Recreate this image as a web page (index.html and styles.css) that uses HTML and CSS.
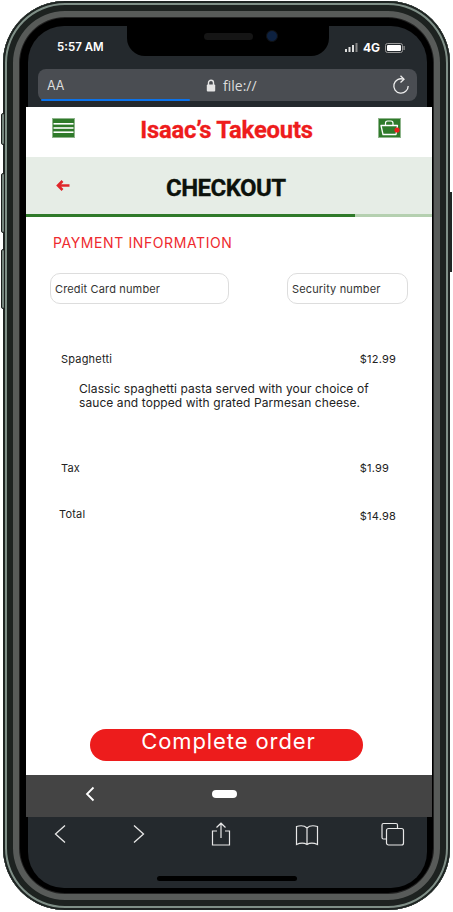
FILE: index.html
```html
<!DOCTYPE html>
<html lang="en">
<head>
  <meta charset="UTF-8" />
  <title>Isaac's Takeouts - Checkout</title>
  <meta name="viewport" content="width=device-width, initial-scale=1.0" />
  <link rel="stylesheet" href="styles.css">
</head>
<body>

<div class="phone">
  <span class="side-btn btn-mute"></span>
  <span class="side-btn btn-up"></span>
  <span class="side-btn btn-down"></span>
  <span class="btn-power"></span>

  <div class="notch">
    <span class="speaker"></span>
    <span class="camera"></span>
  </div>

  <div class="screen">
    <div class="status-bar">
      <span class="time">5:57 AM</span>
      <div class="status-icons">
        <svg width="13" height="9" viewBox="0 0 13 9"><rect x="0" y="6" width="2" height="3" fill="#ddd"/><rect x="3.5" y="4" width="2" height="5" fill="#ddd"/><rect x="7" y="2" width="2" height="7" fill="#ddd"/><rect x="10.5" y="0" width="2" height="9" fill="#888"/></svg>
        <span class="net">4G</span>
        <svg width="20" height="10" viewBox="0 0 20 10"><rect x="0.5" y="0.5" width="17" height="9" rx="2" fill="none" stroke="#999"/><rect x="2" y="2" width="14" height="6" rx="1" fill="#fff"/><rect x="18.5" y="3" width="1.2" height="4" fill="#999"/></svg>
      </div>
    </div>

    <div class="url-bar">
      <span class="aa">AA</span>
      <div class="url">
        <svg width="10" height="13" viewBox="0 0 10 13"><path d="M2.5 6V3.8a2.5 2.5 0 0 1 5 0V6" fill="none" stroke="#e4e4e4" stroke-width="1.4"/><rect x="0.8" y="5.5" width="8.4" height="7" rx="1" fill="#e4e4e4"/></svg>
        <span>file://</span>
      </div>
      <svg class="reload" width="18" height="20" viewBox="0 0 18 20"><path d="M11.5 4.2A7.2 7.2 0 1 0 16.2 11" fill="none" stroke="#eee" stroke-width="1.3"/><path d="M8.5 0.8L12 4.2 8.5 7.5" fill="none" stroke="#eee" stroke-width="1.3"/></svg>
      <span class="url-progress"></span>
    </div>

    <div class="page">
      <header class="site-header">
        <svg class="head-icon" width="23" height="20" viewBox="0 0 23 20"><rect width="23" height="20" fill="#2f7a2a"/><rect x="1.5" y="5" width="20" height="1.6" fill="#fff"/><rect x="1.5" y="9.2" width="20" height="1.6" fill="#fff"/><rect x="1.5" y="13.4" width="20" height="1.6" fill="#fff"/></svg>
        <h1>Isaac’s Takeouts</h1>
        <svg class="head-icon" width="23" height="20" viewBox="0 0 23 20"><rect width="23" height="20" fill="#2f7a2a"/><path d="M3 7.5H19.5L18 16.5H5Z" fill="none" stroke="#fff" stroke-width="1.3" stroke-linejoin="round"/><path d="M7.5 7.5V5.2C7.5 3.6 8.5 3 9.5 3H13C14 3 15 3.6 15 5.2V7.5" fill="none" stroke="#fff" stroke-width="1.2"/><circle cx="19" cy="12" r="2.6" fill="#ee1c1c"/></svg>
      </header>

      <div class="checkout-bar">
        <svg class="back-arrow" width="14" height="11" viewBox="0 0 14 11"><path d="M6.5 1L2 5.5 6.5 10M2 5.5H13.5" fill="none" stroke="#e0262a" stroke-width="2.6"/></svg>
        <h2>CHECKOUT</h2>
      </div>
      <div class="step-line"><span class="step-done"></span></div>

      <main class="content">
        <h3 class="section-title">PAYMENT INFORMATION</h3>

        <div class="inputs">
          <input class="field card-field" type="text" placeholder="Credit Card number" />
          <input class="field cvv-field" type="text" placeholder="Security number" />
        </div>

        <div class="line spaghetti"><span>Spaghetti</span><span>$12.99</span></div>
        <p class="desc">Classic spaghetti pasta served with your choice of sauce and topped with grated Parmesan cheese.</p>
        <div class="line tax"><span>Tax</span><span>$1.99</span></div>
        <div class="line total"><span>Total</span><span class="total-price">$14.98</span></div>

        <button class="order-btn"><span>Complete order</span></button>
      </main>

      <div class="android-nav">
        <svg width="12" height="16" viewBox="0 0 12 16"><path d="M9.5 1.5L3 8l6.5 6.5" fill="none" stroke="#fff" stroke-width="1.8"/></svg>
        <span class="pill"></span>
      </div>
    </div>

    <nav class="toolbar">
      <svg width="24" height="24" viewBox="0 0 24 24"><path d="M17 3.5L7.5 12l9.5 8.5" fill="none" stroke="#e8e8e8" stroke-width="1.3"/></svg>
      <svg width="24" height="24" viewBox="0 0 24 24"><path d="M7 3.5L16.5 12 7 20.5" fill="none" stroke="#e8e8e8" stroke-width="1.3"/></svg>
      <svg width="24" height="24" viewBox="0 0 24 24"><path d="M8 9H3.5V23H20.5V9H16M12 16V1.5M7.5 5.5L12 1.2 16.5 5.5" fill="none" stroke="#e8e8e8" stroke-width="1.2"/></svg>
      <svg width="24" height="24" viewBox="0 0 24 24"><path d="M12 6C9.5 3.5 5 3.5 1.5 4.5V22.5C5 21 9.5 21 12 22.5 14.5 21 19 21 22.5 22.5V4.5C19 3.5 14.5 3.5 12 6ZM12 6V22.5" fill="none" stroke="#e8e8e8" stroke-width="1.2"/></svg>
      <svg width="24" height="24" viewBox="0 0 24 24"><path d="M5 17H2.5A1.5 1.5 0 0 1 1 15.5V3A1.5 1.5 0 0 1 2.5 1.5H15A1.5 1.5 0 0 1 16.5 3V6" fill="none" stroke="#e8e8e8" stroke-width="1.2"/><rect x="5.5" y="6.5" width="17" height="16.5" rx="2" fill="none" stroke="#e8e8e8" stroke-width="1.2"/></svg>
    </nav>

    <div class="home-bar"></div>
  </div>
</div>

</body>
</html>
```

FILE: styles.css
```css
body {
  margin: 0;
  background: #fff;
  font-family: 'Inter', 'Liberation Sans', sans-serif;
}

/* device frame */
.phone {
  position: relative;
  box-sizing: border-box;
  width: 447px;
  height: 909px;
  margin: 1px 0 0 3px;
  padding: 25px 23px 22px 25px;
  background: #000;
  border-radius: 62px;
  box-shadow: inset 0 0 0 2px #1e2422, inset 0 0 0 4px #7f8f87, inset 0 0 0 10px #1d2220, inset 0 0 0 16px #585b59, inset 0 0 0 17px #222;
}

.side-btn {
  position: absolute;
  left: -2px;
  width: 4px;
  background: #74837c;
  border: 1px solid #1c1f1e;
  box-sizing: border-box;
  border-radius: 2px;
}
.btn-mute { top: 112px; height: 32px; }
.btn-up { top: 172px; height: 60px; }
.btn-down { top: 248px; height: 60px; }
.btn-power {
  position: absolute;
  right: -2px;
  top: 191px;
  width: 2px;
  height: 80px;
  background: #222725;
}

.notch {
  position: absolute;
  left: 124px;
  top: 25px;
  width: 202px;
  height: 30px;
  background: #000;
  border-radius: 0 0 18px 18px;
  z-index: 2;
}
.speaker {
  position: absolute;
  left: 77px;
  top: 7px;
  width: 49px;
  height: 7px;
  background: #151515;
  border-radius: 4px;
}
.camera {
  position: absolute;
  left: 139px;
  top: 4px;
  width: 12px;
  height: 12px;
  background: #0d2140;
  border: 1px solid #111;
  box-sizing: border-box;
  border-radius: 50%;
}

.screen {
  position: relative;
  height: 100%;
  background: #24292d;
  border-radius: 36px;
  display: flex;
  flex-direction: column;
}

/* status + url */
.status-bar {
  height: 43px;
  padding: 0 22px 0 29px;
  display: flex;
  justify-content: space-between;
  align-items: center;
  color: #fff;
  font-size: 11.5px;
  font-weight: 600;
  line-height: 14px;
  box-sizing: border-box;
  flex: none;
}
.time { padding-bottom: 2px; }
.status-icons {
  display: flex;
  align-items: center;
  gap: 5px;
}
.net { font-size: 12px; font-weight: 700; }

.url-bar {
  position: relative;
  flex: none;
  margin: 0 10px;
  height: 32px;
  background: #4a4d52;
  border-radius: 8px;
  display: flex;
  align-items: center;
  padding: 0 7px 0 9px;
  color: #dcdcdc;
  font-size: 12.5px;
  box-sizing: border-box;
}
.aa { width: 159px; }
.url {
  display: flex;
  align-items: center;
  gap: 7px;
  font-family: 'Open Sans', sans-serif;
  font-size: 14px;
  flex: 1;
}
.url-progress {
  position: absolute;
  left: 3px;
  bottom: 0;
  width: 149px;
  height: 2px;
  background: #0b72ea;
  border-radius: 1px;
}

/* web page */
.page {
  flex: none;
  margin: 6px -5px 0 -2px;
  height: 710px;
  background: #fff;
  display: flex;
  flex-direction: column;
}
.site-header {
  flex: none;
  height: 50px;
  padding: 11px 31px 0 26px;
  box-sizing: border-box;
  display: flex;
  justify-content: space-between;
  align-items: flex-start;
}
.head-icon { outline: 1px solid #8fb58c; outline-offset: -1px; }
.site-header h1 {
  margin: 0;
  color: #ee1c1c;
  font-family: 'Roboto', sans-serif;
  font-size: 23.8px;
  font-weight: 700;
  line-height: 24px;
  -webkit-text-stroke: 0.3px #ee1c1c;
  letter-spacing: -0.2px;
}

.checkout-bar {
  flex: none;
  height: 57px;
  box-sizing: border-box;
  background: #e6ede6;
  display: flex;
  align-items: center;
  padding: 0 0 0 30px;
}
.checkout-bar h2 {
  margin: 4px 0 0 96px;
  color: #0c120c;
  font-family: 'Roboto', sans-serif;
  font-size: 24px;
  font-weight: 700;
  letter-spacing: -0.55px;
  -webkit-text-stroke: 0.3px #0c120c;
}

.step-line {
  flex: none;
  height: 3px;
  background: #b5d0b0;
}
.step-done {
  display: block;
  width: 329px;
  height: 3px;
  background: #2f7a2a;
}

.content {
  flex: 1;
  padding: 17px 24px 0 24px;
  display: flex;
  flex-direction: column;
  color: #222;
  font-size: 11px;
  letter-spacing: 0.2px;
}
.section-title {
  margin: 0 0 0 3px;
  color: #ee2a2e;
  font-size: 14px;
  font-weight: 400;
  line-height: 18px;
  letter-spacing: 0.6px;
}
.inputs {
  display: flex;
  justify-content: space-between;
  margin-top: 21px;
}
.field {
  box-sizing: border-box;
  height: 31px;
  padding: 0 4px;
  border: 1px solid #ddd;
  border-radius: 10px;
  background: #fff;
  font-family: inherit;
  font-size: 11px;
  letter-spacing: 0.15px;
}
.field::placeholder { color: #333; opacity: 1; }
.card-field { width: 179px; }
.cvv-field { width: 121px; }

.line {
  display: flex;
  justify-content: space-between;
  line-height: 14px;
  padding: 0 12px 0 11px;
}
.spaghetti { margin-top: 48px; }
.desc {
  margin: 16px 14px 0 29px;
  font-size: 12px;
  line-height: 13.5px;
  letter-spacing: 0.08px;
}
.tax { margin-top: 52px; padding-right: 19px; }
.total { margin-top: 32px; padding-left: 9px; }
.total-price { padding-top: 2px; }

.order-btn {
  flex: none;
  width: 273px;
  height: 32px;
  margin: auto 0 14px 40px;
  padding: 0 0 8px 4px;
  background: #ed1c1c;
  border: none;
  border-radius: 16px;
  color: #fff;
  font-family: inherit;
  font-size: 22px;
  line-height: 24px;
  letter-spacing: 0.9px;
}

.android-nav {
  flex: none;
  height: 42px;
  box-sizing: border-box;
  background: #444;
  display: flex;
  align-items: center;
  padding: 0 0 4px 58px;
}
.pill {
  width: 25px;
  height: 8px;
  margin-left: 116px;
  background: #fff;
  border-radius: 4px;
}

/* safari toolbar */
.toolbar {
  flex: none;
  display: grid;
  grid-template-columns: 79px 82px 86px 86px 24px;
  padding: 5px 0 0 20px;
}
.home-bar {
  position: absolute;
  left: 129px;
  bottom: 7px;
  width: 140px;
  height: 5px;
  background: #000;
  border-radius: 3px;
}
```
